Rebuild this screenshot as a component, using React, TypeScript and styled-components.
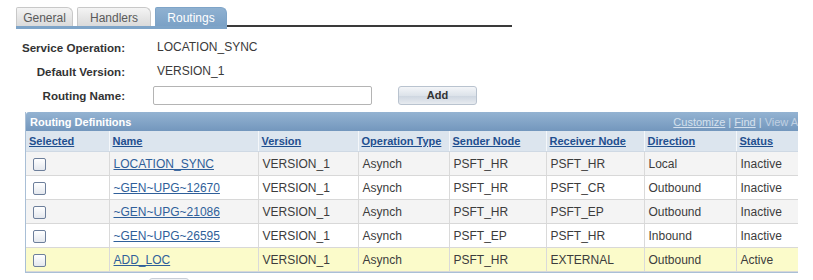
import React from 'react';
import styled, { createGlobalStyle } from 'styled-components';

const Global = createGlobalStyle`
    html, body {
        margin: 0;
        padding: 0;
        background: #ffffff;
        overflow: hidden;
        font-family: "Liberation Sans", Arial, sans-serif;
    }
`

const Page = styled.div`
    width: 813px;
    height: 280px;
    padding-top: 7px;
    box-sizing: border-box;
    color: #333333;
`

const TabBar = styled.div`
    display: flex;
    align-items: flex-end;
    width: 496px;
    margin-left: 16px;
`

const TabGroup = styled.div`
    display: flex;
    gap: 4px;
    border-bottom: 3px solid #7ea4c8;
`

const Tab = styled.div<{ $active?: boolean; $w: number }>`
    width: ${p => p.$w}px;
    box-sizing: border-box;
    height: 19px;
    line-height: 20px;
    text-align: center;
    font-size: 12px;
    border: 1px solid ${p => p.$active ? '#7ea4c8' : '#c8c8c8'};
    border-bottom: none;
    border-radius: 2px 6px 0 0;
    color: ${p => p.$active ? '#ffffff' : '#5a5a5a'};
    background: ${p => p.$active
        ? 'linear-gradient(#8fb1d1, #7ba1c6)'
        : 'linear-gradient(#f4f4f4, #dadada)'};
`

const TabLine = styled.div`
    flex: 1;
    border-bottom: 2px solid #3a3a3a;
    margin-bottom: 2px;
`

const Form = styled.div`
    display: grid;
    grid-template-columns: 125px auto;
    grid-auto-rows: 24px;
    column-gap: 32px;
    align-items: center;
    margin-top: 6px;
`

const Label = styled.div`
    text-align: right;
    font-size: 11.6px;
    font-weight: bold;
    color: #333333;
`

const Value = styled.div`
    font-size: 12px;
    color: #3a3a3a;
    display: flex;
    align-items: center;
`

const Input = styled.input`
    width: 219px;
    height: 19px;
    box-sizing: border-box;
    border: 1px solid #b4b4b4;
    border-radius: 2px;
    margin: 0 0 0 -4px;
    background: #ffffff;
`

const Button = styled.button`
    width: 79px;
    height: 19px;
    margin-left: 26px;
    border: 1px solid #b9c3cf;
    border-radius: 3px;
    font: bold 11px "Liberation Sans", Arial, sans-serif;
    color: #333333;
    background: linear-gradient(#f3f5f8, #dde3ea 50%, #cfd7e1 55%, #e7ebf0);
    padding: 0;
`

const GridWrap = styled.div`
    width: 773px;
    margin: 5px 0 0 25px;
    overflow: hidden;
`

const GridInner = styled.div`
    width: 782px;
    border-left: 1px solid #a9bfd6;
    border-bottom: 1px solid #a9bfd6;
`

const TitleBar = styled.div`
    height: 19px;
    display: flex;
    align-items: center;
    justify-content: space-between;
    padding: 0 5px 0 4px;
    border-radius: 3px 0 0 0;
    background: linear-gradient(#94b3d2, #7397bd);
    font-size: 11px;
    font-weight: bold;
    color: #ffffff;
`

const Nav = styled.div`
    font-weight: normal;
    font-size: 11px;
    color: #d5e1ee;
    a {
        color: #d5e1ee;
        text-decoration: underline;
    }
    span.off {
        color: #c0d0e2;
    }
`

const Table = styled.table`
    border-collapse: collapse;
    table-layout: fixed;
    width: 781px;
`

const Th = styled.th`
    height: 20px;
    padding: 0 0 0 3px;
    text-align: left;
    font-size: 11px;
    font-weight: bold;
    color: #1f4f8f;
    text-decoration: underline;
    background: #dce5ee;
    border-right: 1px solid #f4f7fa;
    border-bottom: 1px solid #cfd9e4;
    white-space: nowrap;
    overflow: hidden;
`

const Tr = styled.tr<{ $bg: string }>`
    background: ${p => p.$bg};
`

const Td = styled.td`
    height: 23px;
    padding: 0 0 0 4px;
    font-size: 12px;
    color: #3c3c3c;
    border-right: 1px solid #dadada;
    border-bottom: 1px solid #d8d8d8;
    white-space: nowrap;
    overflow: hidden;
`

const Link = styled.a`
    color: #2f5f9a;
    text-decoration: underline;
`

const Check = styled.span`
    display: inline-block;
    width: 11px;
    height: 11px;
    margin: 2px 0 0 3px;
    border: 1px solid #6d7f9b;
    border-radius: 2px;
    background: linear-gradient(#ffffff, #e4e8ee);
    vertical-align: middle;
`

const BottomButton = styled.div`
    width: 38px;
    height: 14px;
    margin: 5px 0 0 149px;
    border: 1px solid #c9ced6;
    border-radius: 3px;
    background: #f1f3f6;
`

const tabs = [
    { name: 'General', w: 57 },
    { name: 'Handlers', w: 74 },
    { name: 'Routings', w: 72 },
]

const cols = [
    { name: 'Selected', w: 83 },
    { name: 'Name', w: 149 },
    { name: 'Version', w: 100 },
    { name: 'Operation Type', w: 91 },
    { name: 'Sender Node', w: 97 },
    { name: 'Receiver Node', w: 98 },
    { name: 'Direction', w: 92 },
    { name: 'Status', w: 71 },
]

const rows = [
    ['LOCATION_SYNC', 'PSFT_HR', 'PSFT_HR', 'Local', 'Inactive'],
    ['~GEN~UPG~12670', 'PSFT_HR', 'PSFT_CR', 'Outbound', 'Inactive'],
    ['~GEN~UPG~21086', 'PSFT_HR', 'PSFT_EP', 'Outbound', 'Inactive'],
    ['~GEN~UPG~26595', 'PSFT_EP', 'PSFT_HR', 'Inbound', 'Inactive'],
    ['ADD_LOC', 'PSFT_HR', 'EXTERNAL', 'Outbound', 'Active'],
]

const rowBg = (i: number) => i === 4 ? '#fbfbca' : i % 2 === 0 ? '#f4f4f4' : '#ffffff'

export default function App() {
    return <Page>
        <Global />
        <TabBar>
            <TabGroup>
                {tabs.map(t => <Tab key={t.name} $w={t.w} $active={t.name === 'Routings'}>{t.name}</Tab>)}
            </TabGroup>
            <TabLine />
        </TabBar>

        <Form>
            <Label>Service Operation:</Label>
            <Value>LOCATION_SYNC</Value>
            <Label>Default Version:</Label>
            <Value>VERSION_1</Value>
            <Label>Routing Name:</Label>
            <Value>
                <Input type="text" />
                <Button>Add</Button>
            </Value>
        </Form>

        <GridWrap>
            <GridInner>
                <TitleBar>
                    <span>Routing Definitions</span>
                    <Nav>
                        <a>Customize</a> | <a>Find</a> | <span className="off">View All</span>
                    </Nav>
                </TitleBar>
                <Table>
                    <colgroup>
                        {cols.map(c => <col key={c.name} style={{ width: c.w }} />)}
                    </colgroup>
                    <thead>
                        <tr>
                            {cols.map(c => <Th key={c.name}>{c.name}</Th>)}
                        </tr>
                    </thead>
                    <tbody>
                        {rows.map((r, i) => <Tr key={r[0]} $bg={rowBg(i)}>
                            <Td><Check /></Td>
                            <Td><Link>{r[0]}</Link></Td>
                            <Td>VERSION_1</Td>
                            <Td>Asynch</Td>
                            <Td>{r[1]}</Td>
                            <Td>{r[2]}</Td>
                            <Td>{r[3]}</Td>
                            <Td>{r[4]}</Td>
                        </Tr>)}
                    </tbody>
                </Table>
            </GridInner>
        </GridWrap>
        <BottomButton />
    </Page>
}
